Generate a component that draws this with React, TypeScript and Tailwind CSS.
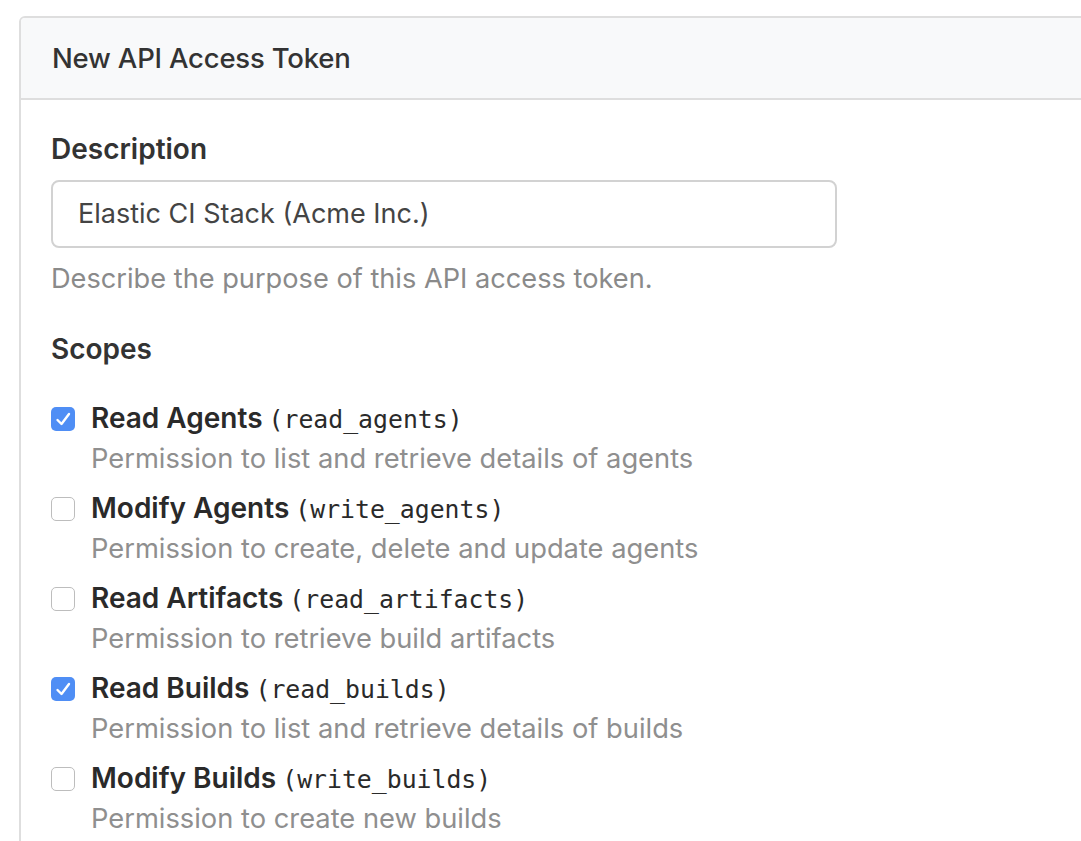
import React from "react";

const scopes = [
  { title: "Read Agents", code: "read_agents", desc: "Permission to list and retrieve details of agents", checked: true },
  { title: "Modify Agents", code: "write_agents", desc: "Permission to create, delete and update agents", checked: false },
  { title: "Read Artifacts", code: "read_artifacts", desc: "Permission to retrieve build artifacts", checked: false },
  { title: "Read Builds", code: "read_builds", desc: "Permission to list and retrieve details of builds", checked: true },
  { title: "Modify Builds", code: "write_builds", desc: "Permission to create new builds", checked: false },
];

function Check({ checked }: { checked: boolean }) {
  if (checked) {
    return (
      <div className="w-[24px] h-[24px] rounded-[5px] bg-[#4f8ef5] flex items-center justify-center shrink-0">
        <svg width="24" height="24" viewBox="0 0 24 24" fill="none">
          <path d="M6.5 13 L10.5 17 L18 7" stroke="white" strokeWidth="2.4" strokeLinecap="round" strokeLinejoin="round" />
        </svg>
      </div>
    );
  }
  return <div className="w-[24px] h-[24px] rounded-[5px] border-[1.5px] border-[#bdbdbd] bg-white shrink-0" />;
}

export default function App() {
  return (
    <div className="min-h-[841px] w-[1081px] bg-white overflow-hidden pt-[16px] pl-[19px]" style={{ fontFamily: "Inter, 'Noto Sans', sans-serif" }}>
      <div className="w-[1100px] h-[860px] border-2 border-[#dedede] rounded-[6px] overflow-hidden">
        <div className="h-[82px] bg-[#f8f9fa] border-b-2 border-[#dedede] flex items-center pl-[31px]">
          <span className="text-[27.5px] font-medium text-[#333] tracking-[-0.2px] relative top-[1px]">New API Access Token</span>
        </div>
        <div className="pl-[30px] pt-[31px]">
          <div className="text-[28px] font-semibold text-[#333] leading-[36px]">Description</div>
          <div className="mt-[13px] w-[786px] h-[68px] border-2 border-[#d2d2d2] rounded-[8px] flex items-center pl-[25px]">
            <span className="text-[27px] text-[#444]">Elastic CI Stack (Acme Inc.)</span>
          </div>
          <div className="mt-[13px] text-[27.2px] text-[#8a8a8a] leading-[36px]">Describe the purpose of this API access token.</div>
          <div className="mt-[34px] text-[28px] font-semibold text-[#333] leading-[36px]">Scopes</div>
          <div className="mt-[29px] flex flex-col">
            {scopes.map((s) => (
              <div key={s.code} className="flex h-[90px]">
                <div className="pt-[11px]"><Check checked={s.checked} /></div>
                <div className="ml-[16px]">
                  <div className="leading-[44px] text-[28px] text-[#2a2a2a] whitespace-nowrap">
                    <span className="font-semibold">{s.title}</span>
                    <span style={{ fontFamily: "'DejaVu Sans Mono', monospace" }} className="text-[24.8px] ml-[6px]">({s.code})</span>
                  </div>
                  <div className="leading-[36px] -mt-[1px] text-[27.3px] text-[#8f8f8f] whitespace-nowrap">{s.desc}</div>
                </div>
              </div>
            ))}
          </div>
        </div>
      </div>
    </div>
  );
}
